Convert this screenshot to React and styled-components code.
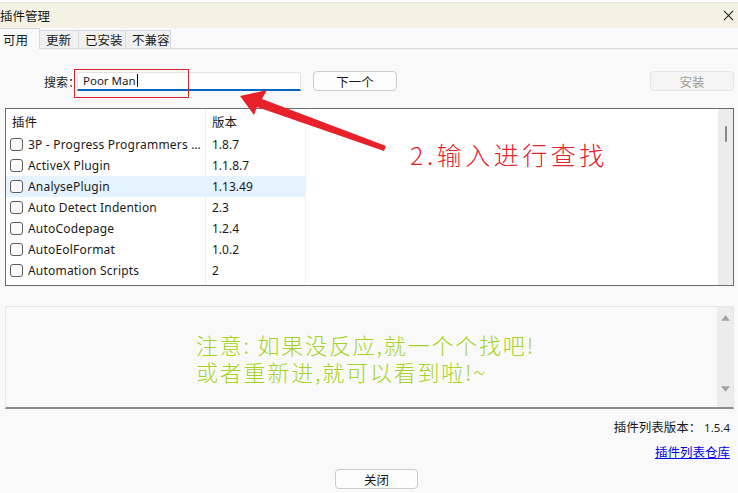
import styled, { createGlobalStyle } from "styled-components"

const GlobalStyle = createGlobalStyle`
    html, body {
        margin: 0;
        padding: 0;
        background: #f9f9f9;
    }
    * {
        box-sizing: border-box;
    }
`

const plugins = [
    { name: "3P - Progress Programmers Pal", version: "1.8.7" },
    { name: "ActiveX Plugin", version: "1.1.8.7" },
    { name: "AnalysePlugin", version: "1.13.49", hover: true },
    { name: "Auto Detect Indention", version: "2.3" },
    { name: "AutoCodepage", version: "1.2.4" },
    { name: "AutoEolFormat", version: "1.0.2" },
    { name: "Automation Scripts", version: "2" },
    { name: "AutoSave", version: "2.6" },
]

const tabs = [
    { label: "可用", width: 40 },
    { label: "更新", width: 40 },
    { label: "已安装", width: 48 },
    { label: "不兼容", width: 46 },
]

export default function App() {
    return (
        <Window>
            <GlobalStyle />
            <TopStrip />
            <TitleBar>
                <span>插件管理</span>
                <CloseIcon viewBox="0 0 12 12">
                    <path d="M1 1 L11 11 M11 1 L1 11" stroke="#1a1a1a" strokeWidth="1.1" fill="none" />
                </CloseIcon>
            </TitleBar>

            <TabBar>
                {tabs.map((t, i) => (
                    <Tab key={t.label} active={i === 0} width={t.width}>{t.label}</Tab>
                ))}
            </TabBar>

            <Content>
                <SearchRow>
                    <Label>搜索：</Label>
                    <SearchInput>
                        Poor Man<Caret />
                    </SearchInput>
                    <Button width={84}>下一个</Button>
                    <Spacer />
                    <Button width={84} disabled>安装</Button>
                </SearchRow>

                <ListBox>
                    <ListInner>
                        <HeaderRow>
                            <Cell>插件</Cell>
                            <Cell>版本</Cell>
                            <Filler />
                        </HeaderRow>
                        {plugins.map(p => (
                            <Row key={p.name} hover={p.hover}>
                                <Cell>
                                    <Check />
                                    <Name>{p.name}</Name>
                                </Cell>
                                <Cell>{p.version}</Cell>
                                <Filler />
                            </Row>
                        ))}
                    </ListInner>
                    <ScrollBar>
                        <Thumb />
                    </ScrollBar>
                </ListBox>

                <NoticeBox>
                    <NoticeText>
                        注意: 如果没反应,就一个个找吧!<br />
                        或者重新进,就可以看到啦!~
                    </NoticeText>
                    <NoticeScroll>
                        <Arrow viewBox="0 0 10 6"><path d="M0 6 L5 0 L10 6 Z" fill="#a3a3a3" /></Arrow>
                        <Arrow viewBox="0 0 10 6"><path d="M0 0 L5 6 L10 0 Z" fill="#a3a3a3" /></Arrow>
                    </NoticeScroll>
                </NoticeBox>

                <Footer>
                    <VersionLine>插件列表版本：&nbsp;<Num>1.5.4</Num></VersionLine>
                    <RepoLink href="#">插件列表仓库</RepoLink>
                </Footer>

                <BottomBar>
                    <Button width={83}>关闭</Button>
                </BottomBar>
            </Content>

            <RedBox />
            <Hint>2.输入进行查找</Hint>
            <ArrowOverlay viewBox="0 0 738 493">
                <polygon
                    points="240,96 267,90 262,99 386,146 384,151 257,107 254,115"
                    fill="#e8202a"
                />
            </ArrowOverlay>
        </Window>
    )
}

const Window = styled.div`
    position: relative;
    width: 738px;
    height: 493px;
    overflow: hidden;
    background: #f9f9f9;
    font-family: "Noto Sans CJK SC", "Noto Sans", sans-serif;
    font-size: 12px;
    color: #1a1a1a;
    display: flex;
    flex-direction: column;
`
const TopStrip = styled.div`
    height: 3px;
    background: #ffffff;
    border-bottom: 1px solid #e2e2e2;
`
const TitleBar = styled.div`
    height: 25px;
    background: #f4f2e3;
    display: flex;
    align-items: center;
    justify-content: space-between;
    padding: 0 4px 0 0;
    font-size: 12.5px;
`
const CloseIcon = styled.svg`
    width: 11px;
    height: 11px;
`
const TabBar = styled.div`
    height: 21px;
    display: flex;
    align-items: flex-end;
    border-bottom: 1px solid #d9d9d9;
    background: #f9f9f9;
`
const Tab = styled.div`
    width: ${p => p.width}px;
    height: ${p => (p.active ? "21px" : "18px")};
    padding-left: ${p => (p.active ? "3px" : "6px")};
    padding-top: ${p => (p.active ? "1px" : "0")};
    display: flex;
    align-items: center;
    font-size: 12.5px;
    background: ${p => (p.active ? "#f9f9f9" : "#f0f0f0")};
    border: 1px solid #d9d9d9;
    border-bottom: none;
    border-left: ${p => (p.active ? "none" : "1px solid #d9d9d9")};
    margin-bottom: ${p => (p.active ? "-1px" : "0")};
    margin-left: ${p => (p.active ? "0" : "-1px")};
    position: relative;
`
const Content = styled.div`
    flex: 1;
    display: flex;
    flex-direction: column;
    padding: 0 4px 0 5px;
`
const SearchRow = styled.div`
    margin-top: 22px;
    height: 20px;
    display: flex;
    align-items: center;
    padding-left: 39px;
`
const Label = styled.div`
    font-size: 12px;
    width: 33px;
    white-space: nowrap;
    flex: none;
    overflow: visible;
`
const SearchInput = styled.div`
    width: 224px;
    height: 19px;
    background: #ffffff;
    border: 1px solid #e2e2e2;
    border-bottom: 2px solid #0067c0;
    border-radius: 3px 3px 0 0;
    padding-left: 5px;
    display: flex;
    align-items: center;
    font-size: 11.5px;
    font-family: "Noto Sans", sans-serif;
`
const Caret = styled.span`
    width: 1px;
    height: 13px;
    background: #000;
    margin-left: 1px;
`
const Button = styled.div`
    width: ${p => p.width}px;
    height: 20px;
    margin-left: 12px;
    border: 1px solid ${p => (p.disabled ? "#e4e4e4" : "#cccccc")};
    border-radius: 4px;
    background: ${p => (p.disabled ? "#f5f5f5" : "#fdfdfd")};
    color: ${p => (p.disabled ? "#9d9d9d" : "#1a1a1a")};
    display: flex;
    align-items: center;
    justify-content: center;
    font-size: 12.5px;
`
const Spacer = styled.div`
    flex: 1;
`
const ListBox = styled.div`
    margin-top: 17px;
    height: 178px;
    border: 1px solid #6b6b6b;
    background: #ffffff;
    display: flex;
    overflow: hidden;
`
const ListInner = styled.div`
    flex: 1;
    display: flex;
    flex-direction: column;
    background: linear-gradient(#e5eef7, #e5eef7) 199px 0 / 1px 100% no-repeat,
        linear-gradient(#eef2f6, #eef2f6) 299px 0 / 1px 100% no-repeat, #ffffff;
`
const HeaderRow = styled.div`
    height: 25px;
    flex: none;
    display: grid;
    grid-template-columns: 200px 100px 1fr;
    align-items: center;
    font-size: 12.5px;
`
const Row = styled.div`
    height: 21px;
    flex: none;
    display: grid;
    grid-template-columns: 200px 100px 1fr;
    align-items: center;
    font-size: 12px;
    background: ${p => (p.hover ? "linear-gradient(90deg, #e5f3ff 300px, transparent 300px)" : "transparent")};
    font-family: "Noto Sans", "Noto Sans CJK SC", sans-serif;
`
const Cell = styled.div`
    display: flex;
    align-items: center;
    padding-left: 6px;
    min-width: 0;
`
const Filler = styled.div``
const Check = styled.span`
    flex: none;
    width: 13px;
    height: 13px;
    border: 1px solid #5c5c5c;
    border-radius: 3px;
    background: #fbfbfb;
    margin-left: -2px;
    margin-right: 5px;
`
const Name = styled.span`
    white-space: nowrap;
    overflow: hidden;
    text-overflow: ellipsis;
    padding-right: 2px;
    letter-spacing: 0.2px;
`
const ScrollBar = styled.div`
    width: 15px;
    background: #ececec;
    display: flex;
    justify-content: center;
    padding-top: 17px;
`
const Thumb = styled.div`
    width: 2px;
    height: 16px;
    background: #8a8a8a;
    border-radius: 1px;
`
const NoticeBox = styled.div`
    margin-top: 20px;
    height: 103px;
    display: flex;
    border: 1px solid #e6e6e6;
    border-bottom: 2px solid #8c8c8c;
    background: #f9f9f9;
`
const NoticeText = styled.div`
    flex: 1;
    padding: 24px 0 0 190px;
    font-family: "Noto Sans CJK SC", sans-serif;
    font-weight: 300;
    font-size: 22px;
    line-height: 27px;
    letter-spacing: 1.8px;
    color: #a6d323;
`
const NoticeScroll = styled.div`
    width: 16px;
    background: #ececec;
    display: flex;
    flex-direction: column;
    justify-content: space-between;
    align-items: center;
    padding: 8px 0 15px;
`
const Arrow = styled.svg`
    width: 9px;
    height: 6px;
`
const Footer = styled.div`
    display: flex;
    flex-direction: column;
    align-items: flex-end;
    padding-right: 4px;
    margin-top: 9px;
    gap: 6px;
`
const VersionLine = styled.div`
    font-size: 12.5px;
    line-height: 18px;
`
const Num = styled.span`
    font-family: "Noto Sans", sans-serif;
    font-size: 11.5px;
`
const RepoLink = styled.a`
    color: #0000ee;
    text-decoration: underline;
    font-size: 12.5px;
    line-height: 18px;
`
const BottomBar = styled.div`
    margin-top: 8px;
    padding-left: 318px;
    display: flex;
`
const RedBox = styled.div`
    position: absolute;
    left: 74px;
    top: 69px;
    width: 115px;
    height: 29px;
    border: 1px solid #e0202a;
`
const Hint = styled.div`
    position: absolute;
    left: 410px;
    top: 139px;
    font-family: "Noto Sans CJK SC", sans-serif;
    font-weight: 300;
    font-size: 25px;
    line-height: 30px;
    color: #e8202a;
    letter-spacing: 3.5px;
`
const ArrowOverlay = styled.svg`
    position: absolute;
    left: 0;
    top: 0;
    width: 738px;
    height: 493px;
    pointer-events: none;
`
